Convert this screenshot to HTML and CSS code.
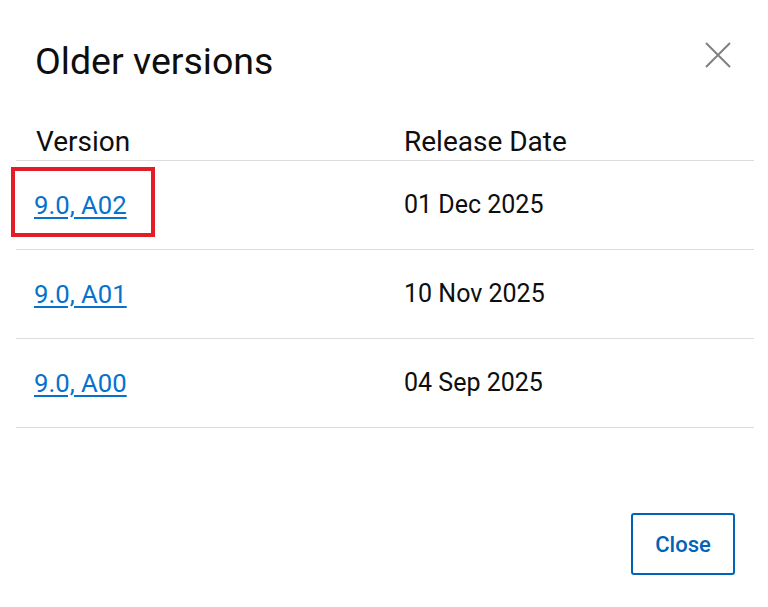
FILE: index.html
```html
<!DOCTYPE html>
<html>
<head>
<meta charset="utf-8">
<link rel="stylesheet" href="styles.css">
</head>
<body>
<div class="dialog">
  <div class="header">
    <h1 class="title">Older versions</h1>
    <button class="close-x" aria-label="Close">
      <svg width="28" height="28" viewBox="0 0 28 28"><path d="M2 2 L26 26 M26 2 L2 26" stroke="#808080" stroke-width="2" fill="none"/></svg>
    </button>
  </div>
  <div class="table">
    <div class="row head">
      <div class="cell c1">Version</div>
      <div class="cell c2">Release Date</div>
    </div>
    <div class="row">
      <div class="cell c1"><a href="#" class="link">9.0, A02</a><span class="highlight"></span></div>
      <div class="cell c2">01 Dec 2025</div>
    </div>
    <div class="row">
      <div class="cell c1"><a href="#" class="link">9.0, A01</a></div>
      <div class="cell c2">10 Nov 2025</div>
    </div>
    <div class="row">
      <div class="cell c1"><a href="#" class="link">9.0, A00</a></div>
      <div class="cell c2">04 Sep 2025</div>
    </div>
  </div>
  <div class="footer">
    <button class="btn">Close</button>
  </div>
</div>
</body>
</html>
```
FILE: styles.css
```css
html, body {
  margin: 0;
  padding: 0;
  background: #fff;
}
body {
  font-family: Roboto, "Liberation Sans", sans-serif;
  color: #0e0e0e;
  width: 768px;
  height: 607px;
  overflow: hidden;
}
.dialog {
  padding: 0 14px 0 16px;
}
.header {
  display: flex;
  justify-content: space-between;
  align-items: flex-start;
  padding: 37px 22px 0 19px;
  height: 71px;
}
.title {
  margin: 0;
  font-size: 37.5px;
  font-weight: 400;
  line-height: 48px;
  color: #0e0e0e;
}
.close-x {
  border: 0;
  background: none;
  padding: 0;
  margin-top: 4px;
  width: 28px;
  height: 28px;
  cursor: pointer;
}
.close-x svg { display: block; }
.table {
  display: flex;
  flex-direction: column;
}
.row {
  display: grid;
  grid-template-columns: 368px 1fr;
  height: 88px;
  align-items: center;
  border-bottom: 1px solid #dcdcdc;
  font-size: 25px;
}
.row.head {
  height: 52px;
  align-items: end;
  font-size: 28px;
}
.row.head .cell {
  padding-bottom: 3px;
}
.cell {
  padding-left: 20px;
  line-height: 30px;
}
.c1 { position: relative; }
.row:not(.head) .c1 { padding-left: 18px; }
.link {
  font-size: 25.7px;
  color: #0672cb;
  text-decoration: underline;
  text-underline-offset: 3px;
  text-decoration-thickness: 2px;
}
.highlight {
  position: absolute;
  left: -5px;
  top: -23px;
  width: 136px;
  height: 62px;
  border: 4px solid #e21d25;
  pointer-events: none;
}
.footer {
  display: flex;
  justify-content: flex-end;
  padding: 85px 19px 0 0;
}
.btn {
  font-family: Roboto, "Liberation Sans", sans-serif;
  font-size: 22px;
  font-weight: 500;
  color: #0063b8;
  background: #fff;
  border: 2px solid #0063b8;
  border-radius: 3px;
  width: 104px;
  height: 62px;
  padding: 0;
  cursor: pointer;
}
```
